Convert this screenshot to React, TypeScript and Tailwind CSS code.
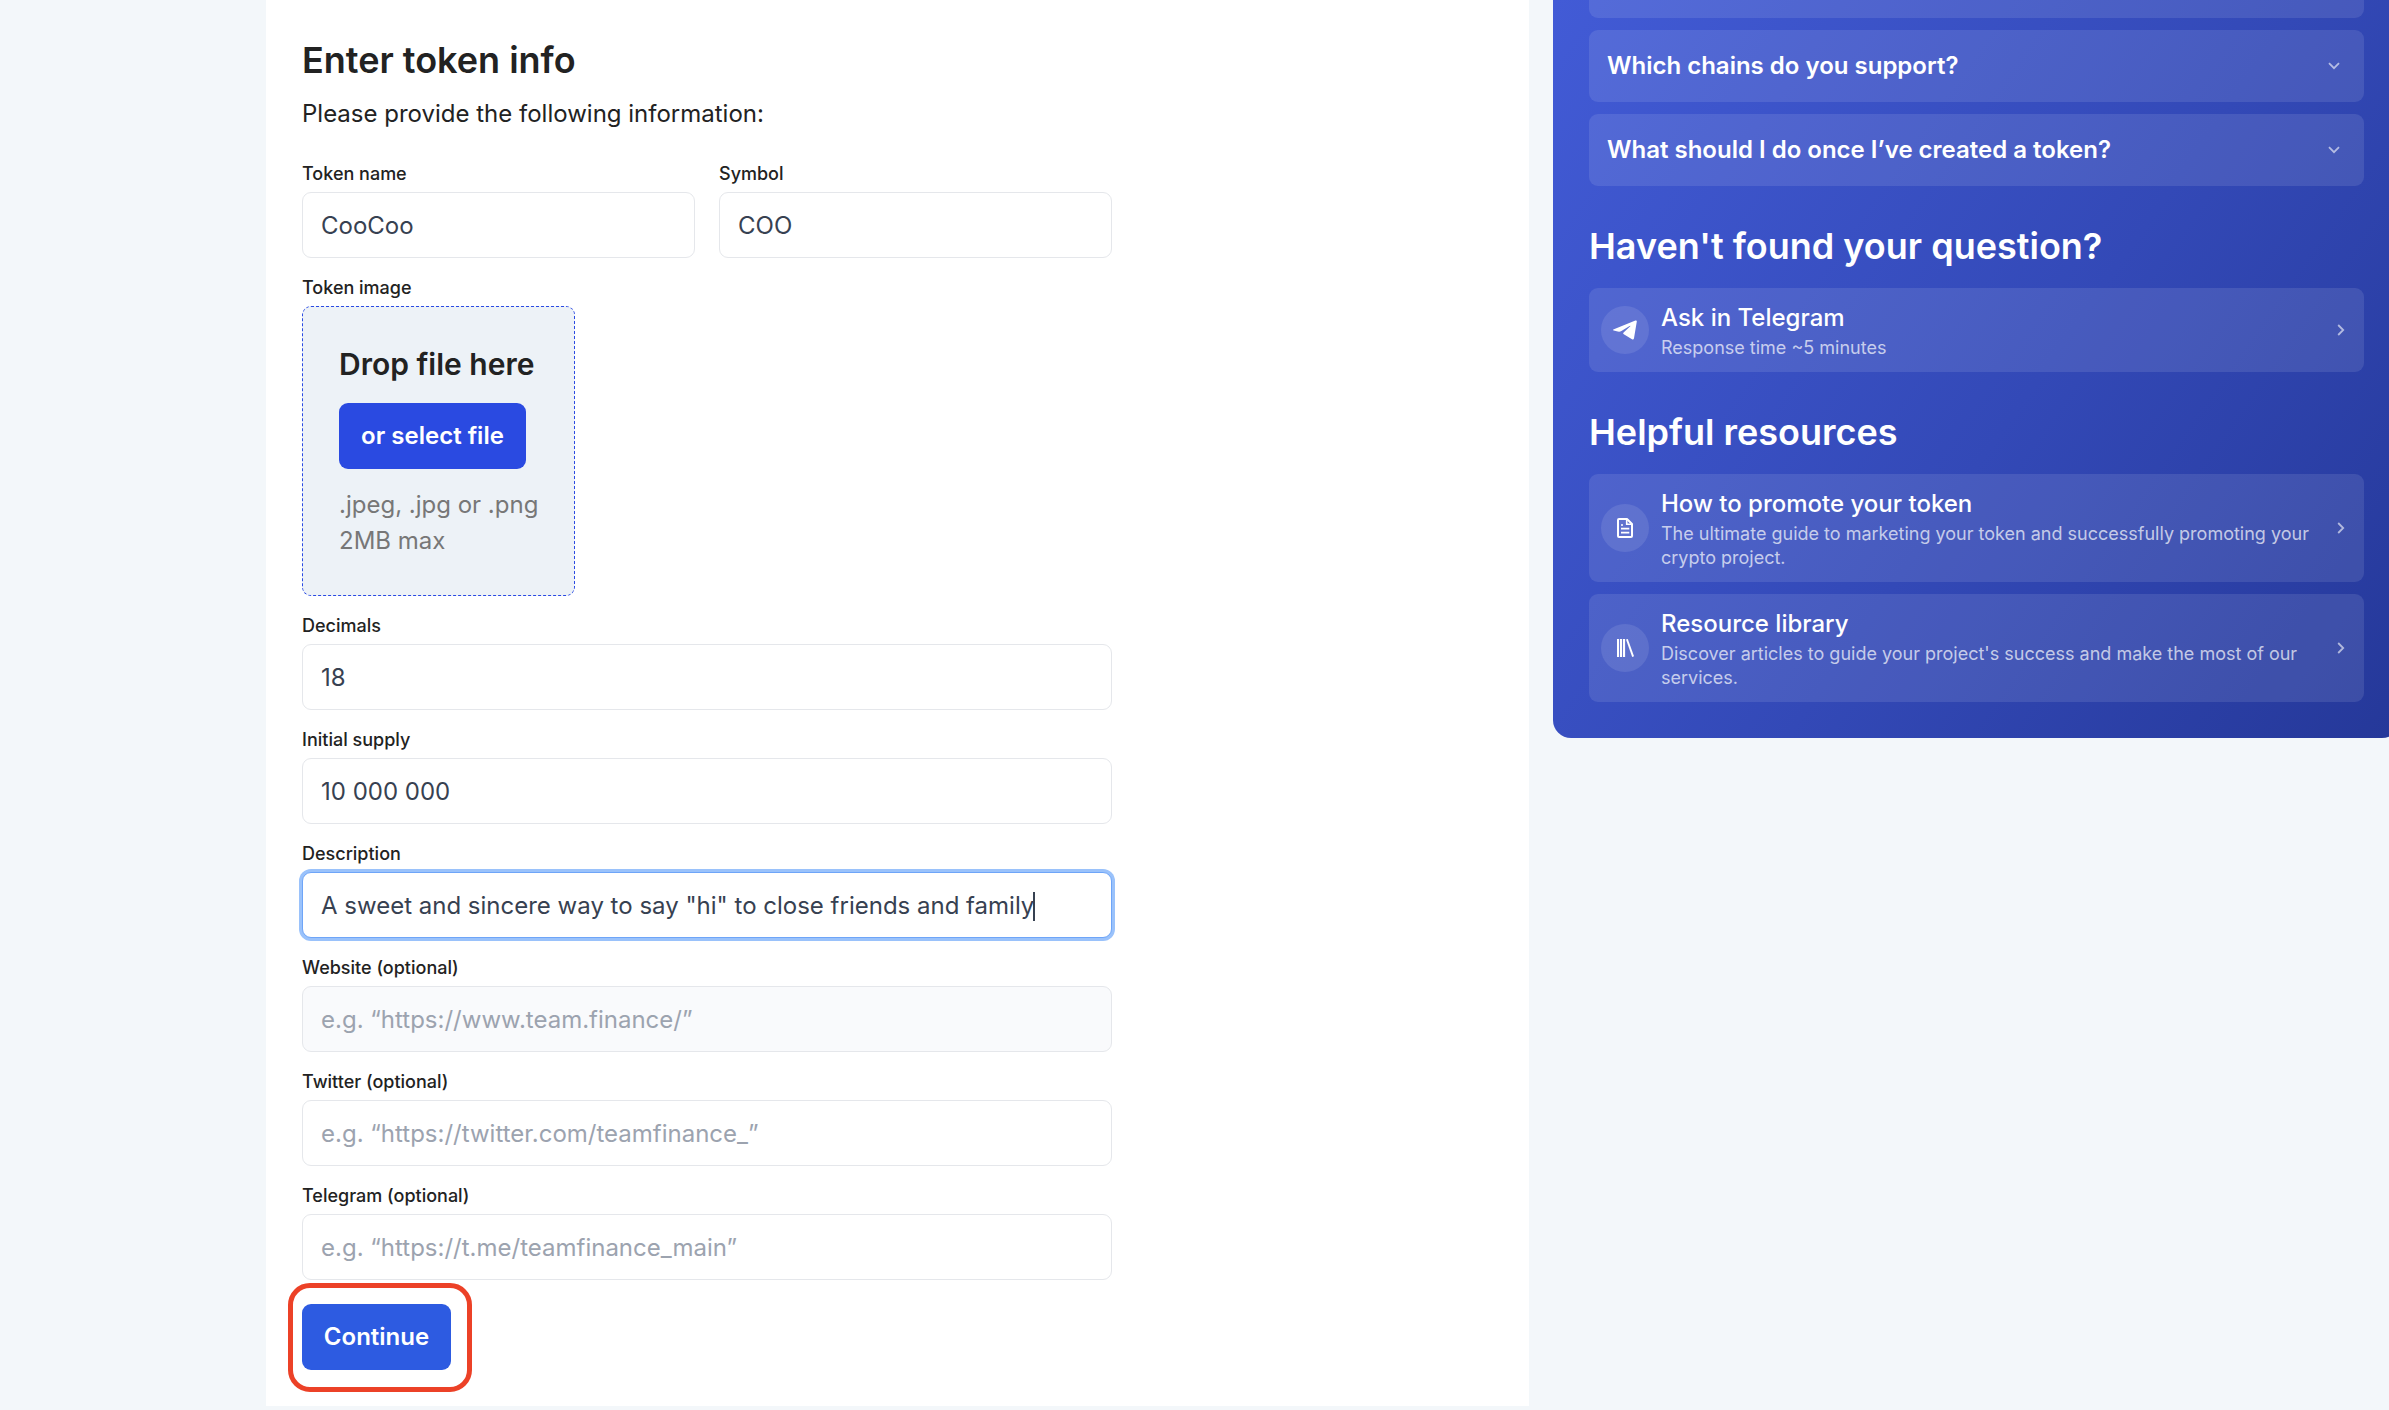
import type { ReactNode } from "react";

function Label({ children }: { children: ReactNode }) {
  return <div className="text-[18px] leading-6 font-medium text-[#222222]">{children}</div>;
}

type FieldProps = {
  label: string;
  value?: string;
  placeholder?: string;
  focused?: boolean;
  hovered?: boolean;
};

function Field({ label, value, placeholder, focused, hovered }: FieldProps) {
  return (
    <div className="flex flex-1 flex-col gap-1.5">
      <Label>{label}</Label>
      <div
        className={`flex h-[66px] items-center rounded-[9px] border px-[18px] pt-[2px] text-[24px] leading-9 ${
          focused ? "border-[#6ea5f8] ring-3 ring-[#9ac2fb]" : "border-[#e5e7eb]"
        } ${hovered ? "bg-[#f9fafc]" : "bg-white"}`}
      >
        {value ? (
          <span className="whitespace-nowrap text-[#374151]">{value}</span>
        ) : (
          <span className="whitespace-nowrap text-[#9ca3af]">{placeholder}</span>
        )}
        {focused && <span className="-ml-px h-[29px] w-[2px] bg-[#374151]" />}
      </div>
    </div>
  );
}

function ChevronDown() {
  return (
    <svg className="h-[8px] w-[12px] shrink-0" viewBox="0 0 12 8" fill="none">
      <path d="M1 1.2L6 6.2L11 1.2" stroke="white" strokeOpacity="0.6" strokeWidth="1.8" />
    </svg>
  );
}

function ChevronRight() {
  return (
    <svg className="h-[12px] w-[8px] shrink-0" viewBox="0 0 8 12" fill="none">
      <path d="M1.2 1L6.2 6L1.2 11" stroke="white" strokeOpacity="0.6" strokeWidth="1.8" />
    </svg>
  );
}

function TelegramIcon() {
  return (
    <svg className="h-5 w-6" viewBox="0 0 24 20" fill="white">
      <path d="M0.3 9.6L22.4 0.5Q24 0 23.8 1.6L21 18.3Q20.5 20.2 19 19.2L10.8 14.3Q9.6 13.4 10.6 12.4L17.3 6.2Q17.5 5.4 16.6 5.9L8.4 11Q6.8 12 4.8 11.5L0.7 10.5Q-0.4 10 0.3 9.6Z" />
    </svg>
  );
}

function DocumentIcon() {
  return (
    <svg className="h-5 w-4" viewBox="0 0 16 20" fill="none" stroke="white" strokeWidth="2">
      <path d="M10 1H2Q1 1 1 2V18Q1 19 2 19H14Q15 19 15 18V6Z" strokeLinejoin="round" />
      <path d="M9.7 1V6.3H15" strokeWidth="1.6" />
      <path d="M4 7H6M4 10.7H12.3M4 14.7H12.3" strokeWidth="1.7" />
    </svg>
  );
}

function LibraryIcon() {
  return (
    <svg className="h-[18px] w-[17px]" viewBox="0 0 17 18" fill="white">
      <rect x="0" y="0" width="2.1" height="18" />
      <rect x="3" y="0" width="2.1" height="18" />
      <rect x="6" y="0" width="2.1" height="18" />
      <path d="M9 0.6L10.8 0L17 17.3L15.2 18Z" />
    </svg>
  );
}

function Question({ children }: { children: ReactNode }) {
  return (
    <div className="flex h-[72px] items-center justify-between rounded-[9px] bg-white/10 pr-6 pl-[18px]">
      <span className="text-[24px] leading-9 font-semibold text-white">{children}</span>
      <ChevronDown />
    </div>
  );
}

function LinkCard({ icon, title, lines }: { icon: ReactNode; title: string; lines: string[] }) {
  return (
    <div className="flex items-center rounded-[9px] bg-white/10 py-3 pr-[19px] pl-3">
      <div className="flex size-12 shrink-0 items-center justify-center rounded-full bg-white/10 text-white">
        {icon}
      </div>
      <div className="ml-3 flex-1">
        <div className="text-[24px] leading-9 font-medium text-white">{title}</div>
        {lines.map((line) => (
          <div key={line} className="text-[18px] leading-6 whitespace-nowrap text-white/70">
            {line}
          </div>
        ))}
      </div>
      <ChevronRight />
    </div>
  );
}

function PanelTitle({ children }: { children: ReactNode }) {
  return <h2 className="text-[36px] leading-[48px] font-semibold text-white">{children}</h2>;
}

export default function App() {
  return (
    <div className="flex h-[1410px] w-[2389px] items-start gap-6 overflow-hidden bg-[#f3f7fa] pl-[266px] font-['Inter',sans-serif]">
      <main className="h-[1406px] w-[1263px] shrink-0 bg-white p-9">
        <h1 className="text-[36px] leading-[48px] font-semibold text-[#222222]">Enter token info</h1>
        <p className="mt-3 text-[24px] leading-9 text-[#222222]">Please provide the following information:</p>

        <div className="mt-[30px] flex w-[810px] flex-col gap-[18px]">
          <div className="flex gap-6">
            <Field label="Token name" value="CooCoo" />
            <Field label="Symbol" value="COO" />
          </div>

          <div className="flex flex-col items-start gap-1.5">
            <Label>Token image</Label>
            <div className="h-[290px] w-[273px] rounded-[9px] border border-dashed border-[#2a4ae3] bg-[#edf2f7] p-9">
              <div className="text-[30px] leading-[42px] font-semibold whitespace-nowrap text-[#222222]">
                Drop file here
              </div>
              <button className="mt-[18px] flex h-[66px] w-[187px] items-center justify-center rounded-[9px] bg-[#2a4ae1] text-[24px] font-semibold whitespace-nowrap text-white">
                or select file
              </button>
              <div className="mt-[18px] text-[24px] leading-9 whitespace-nowrap text-[#777777]">
                <div>.jpeg, .jpg or .png</div>
                <div>2MB max</div>
              </div>
            </div>
          </div>

          <Field label="Decimals" value="18" />
          <Field label="Initial supply" value="10 000 000" />
          <Field label="Description" value={'A sweet and sincere way to say "hi" to close friends and family'} focused />
          <Field label="Website (optional)" placeholder="e.g. “https://www.team.finance/”" hovered />
          <Field label="Twitter (optional)" placeholder="e.g. “https://twitter.com/teamfinance_”" />
          <Field label="Telegram (optional)" placeholder="e.g. “https://t.me/teamfinance_main”" />
        </div>

        <div className="relative mt-6 w-[149px]">
          <button className="flex h-[66px] w-[149px] items-center justify-center rounded-[9px] bg-[#2d5be1] text-[24px] font-semibold text-white">
            Continue
          </button>
          <div className="absolute -top-[21px] -left-[14px] h-[109px] w-[184px] rounded-[22px] border-5 border-[#ec4127]" />
        </div>
      </main>

      <aside className="flex h-[738px] w-[847px] shrink-0 flex-col rounded-b-[18px] bg-[linear-gradient(125deg,#425bd6_0%,#3349b7_55%,#253899_100%)] px-9 pb-9">
        <div className="h-[18px] shrink-0 rounded-b-[9px] bg-white/10" />
        <div className="mt-3 flex flex-col gap-3">
          <Question>Which chains do you support?</Question>
          <Question>What should I do once I’ve created a token?</Question>
        </div>

        <div className="mt-9 flex flex-col gap-[18px]">
          <PanelTitle>Haven't found your question?</PanelTitle>
          <LinkCard
            icon={<TelegramIcon />}
            title="Ask in Telegram"
            lines={["Response time ~5 minutes"]}
          />
        </div>

        <div className="mt-9 flex flex-col gap-[18px]">
          <PanelTitle>Helpful resources</PanelTitle>
          <div className="flex flex-col gap-3">
            <LinkCard
              icon={<DocumentIcon />}
              title="How to promote your token"
              lines={[
                "The ultimate guide to marketing your token and successfully promoting your",
                "crypto project.",
              ]}
            />
            <LinkCard
              icon={<LibraryIcon />}
              title="Resource library"
              lines={[
                "Discover articles to guide your project's success and make the most of our",
                "services.",
              ]}
            />
          </div>
        </div>
      </aside>
    </div>
  );
}
